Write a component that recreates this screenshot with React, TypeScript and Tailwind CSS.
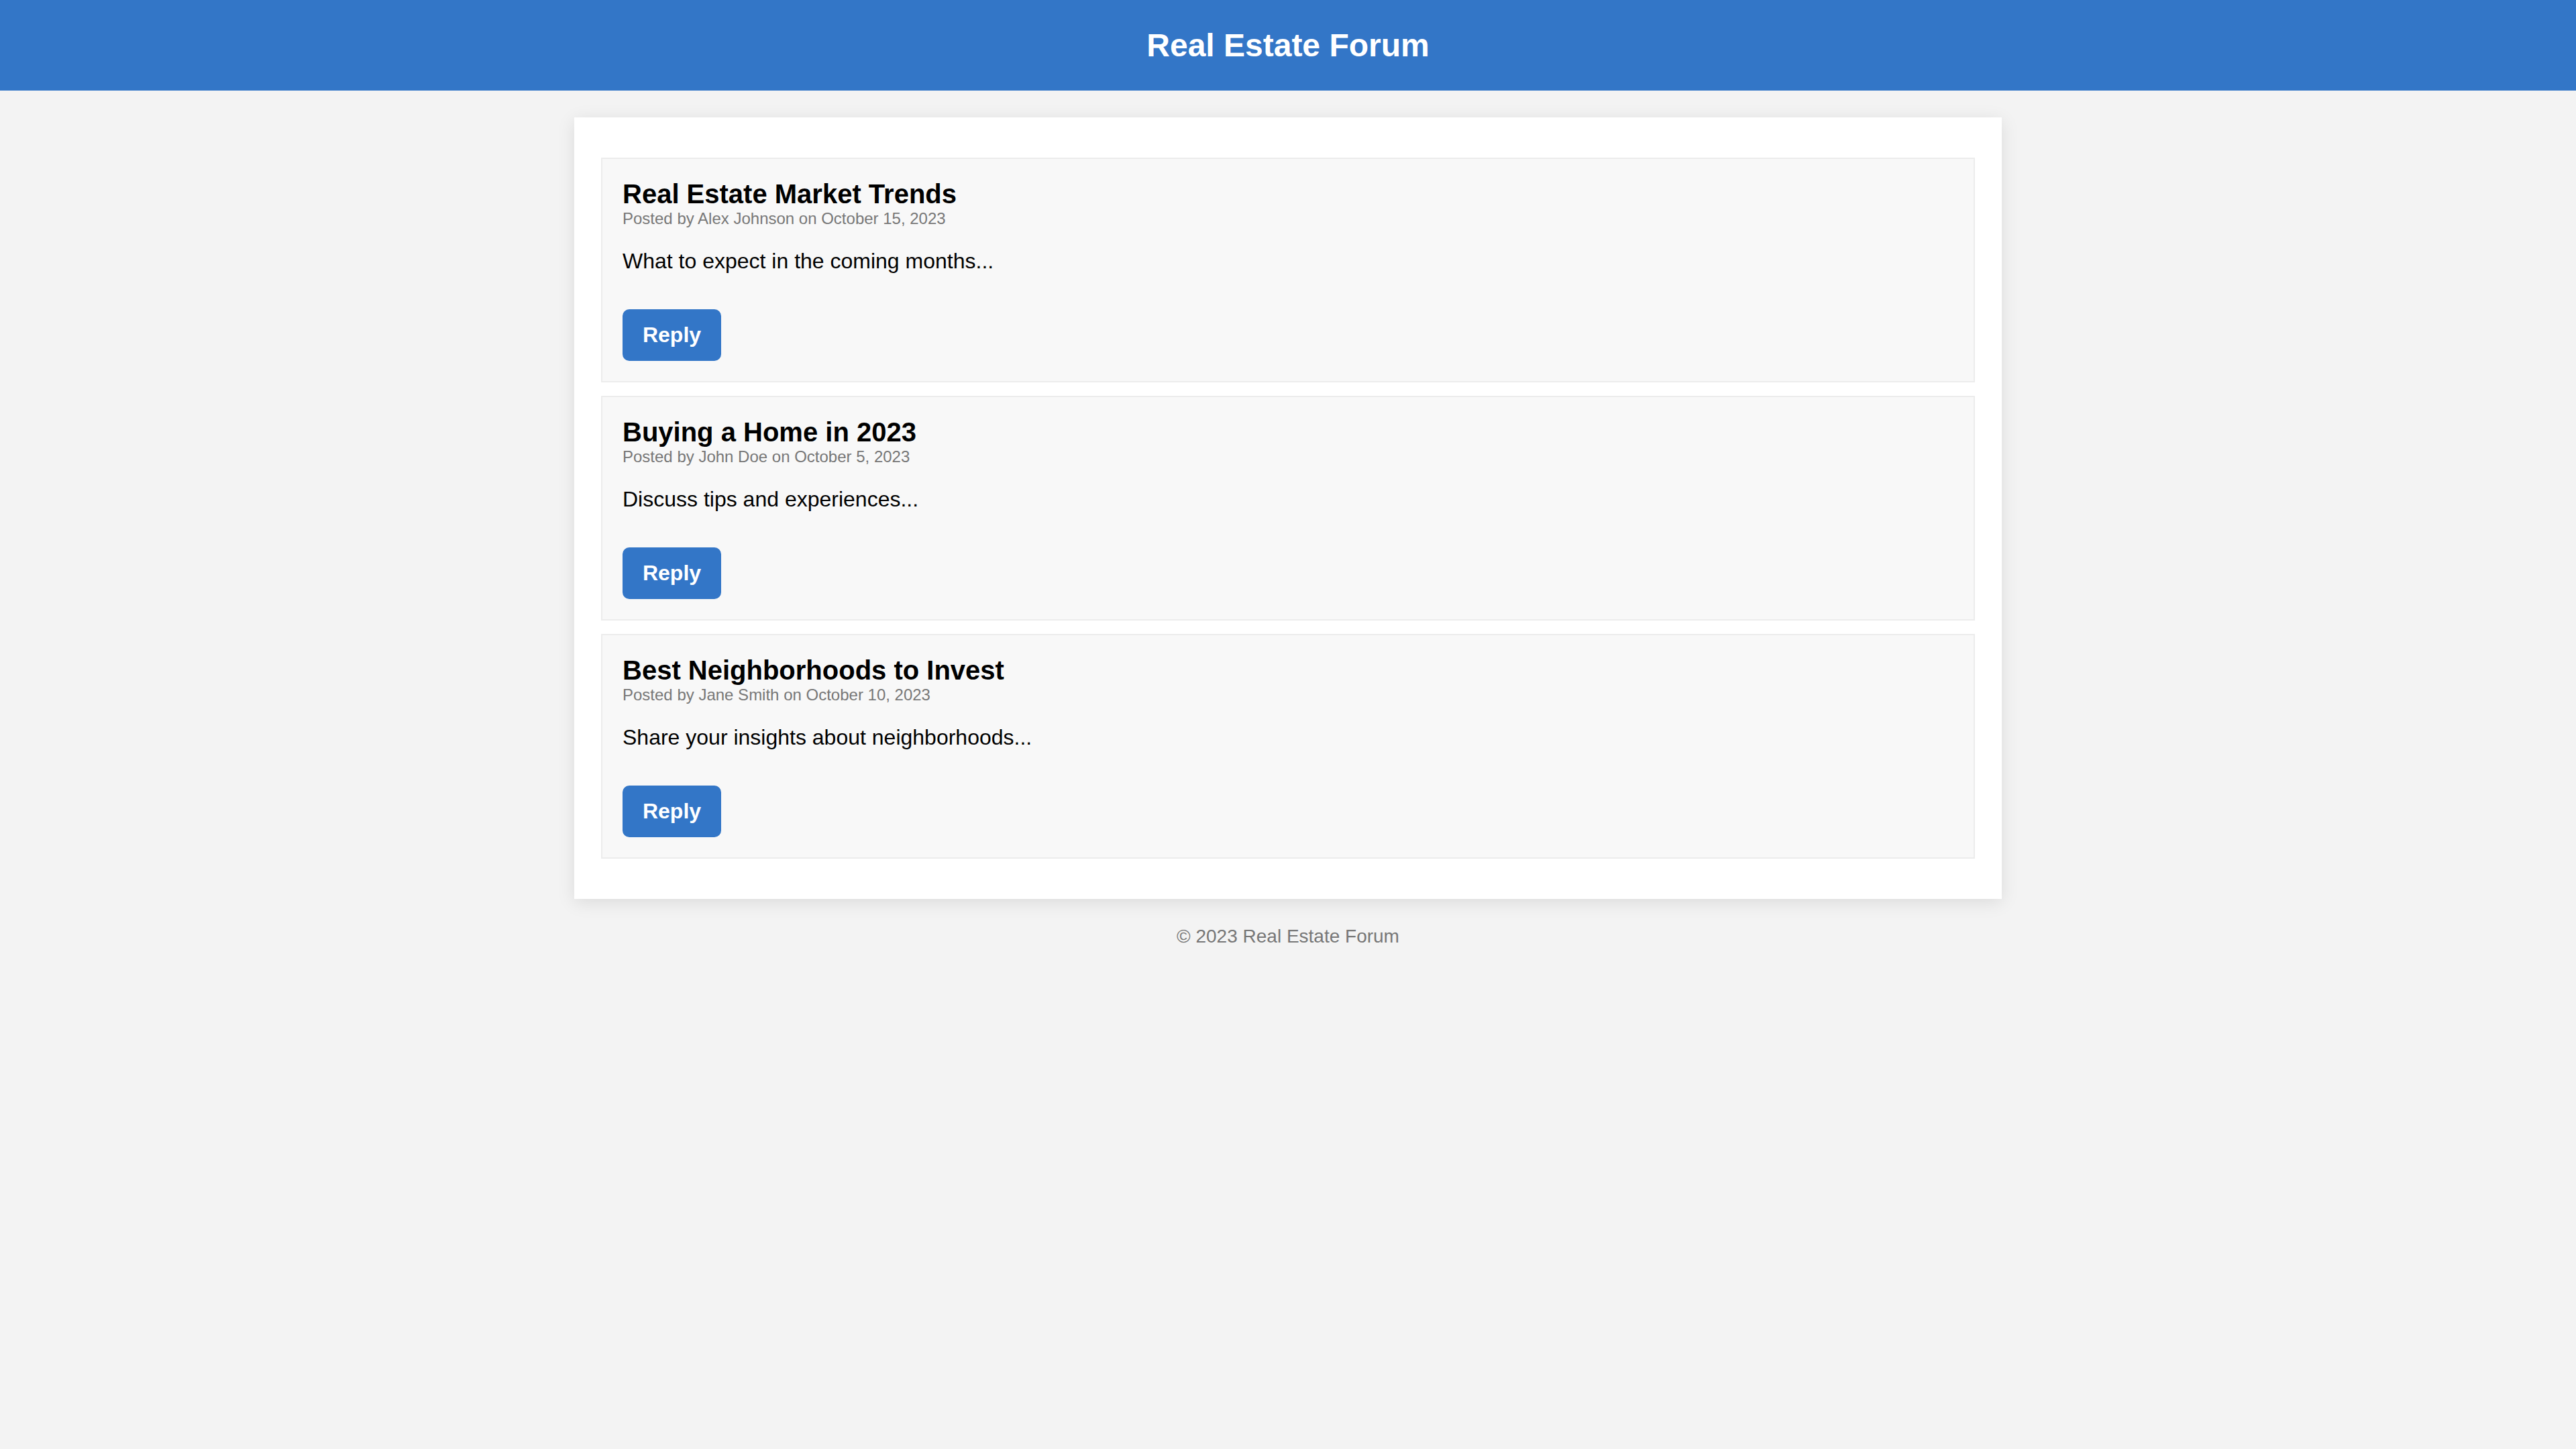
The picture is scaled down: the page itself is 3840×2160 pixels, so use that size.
const posts = [
  {
    title: 'Real Estate Market Trends',
    author: 'Alex Johnson',
    date: 'October 15, 2023',
    body: 'What to expect in the coming months...',
  },
  {
    title: 'Buying a Home in 2023',
    author: 'John Doe',
    date: 'October 5, 2023',
    body: 'Discuss tips and experiences...',
  },
  {
    title: 'Best Neighborhoods to Invest',
    author: 'Jane Smith',
    date: 'October 10, 2023',
    body: 'Share your insights about neighborhoods...',
  },
];

function PostCard({ title, author, date, body }: (typeof posts)[number]) {
  return (
    <div className="border-2 border-[#ececec] bg-[#f8f8f8] p-[30px]">
      <h2 className="text-[40px] leading-[45px] font-bold text-black">{title}</h2>
      <p className="text-[24px] leading-[27px] text-[#777]">
        Posted by {author} on {date}
      </p>
      <p className="mt-[32px] text-[32px] leading-[36px] text-black">{body}</p>
      <button className="mt-[54px] h-[77px] w-[147px] rounded-[10px] bg-[#3376c7] text-[32px] leading-[37px] font-bold text-white">
        Reply
      </button>
    </div>
  );
}

export default function App() {
  return (
    <div className="min-h-screen bg-[#f3f3f3] font-['Liberation_Sans',Arial,sans-serif]">
      <header className="flex h-[135px] items-center justify-center bg-[#3376c7]">
        <h1 className="text-[48px] leading-[54px] font-bold text-white">Real Estate Forum</h1>
      </header>

      <main className="mx-auto mt-[40px] flex w-[2128px] flex-col gap-[20px] bg-white px-[40px] py-[60px] shadow-[0_5px_25px_rgba(0,0,0,0.1)]">
        {posts.map((p) => (
          <PostCard key={p.title} {...p} />
        ))}
      </main>

      <footer className="mt-[40px] text-center text-[28px] leading-[32px] text-[#777]">
        © 2023 Real Estate Forum
      </footer>
    </div>
  );
}
